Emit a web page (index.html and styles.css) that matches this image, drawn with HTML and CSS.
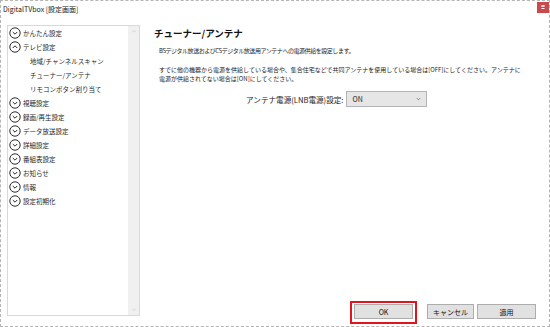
FILE: index.html
```html
<!DOCTYPE html>
<html lang="ja">
<head>
<meta charset="utf-8">
<link rel="stylesheet" href="styles.css">
</head>
<body>
<div class="window">
  <div class="titlebar">
    <span class="title">DigitalTVbox [設定画面]</span>
    <span class="close"><svg width="12" height="11" viewBox="0 0 12 11"><path d="M4 4h4M6 3v2M4.5 6.5h3" stroke="#fff" stroke-width="1"/></svg></span>
  </div>
  <div class="main">
    <div class="tree">
      <div class="tree-list">
        <div class="item"><svg class="ic" viewBox="0 0 12 12"><circle cx="6" cy="6" r="5.2"/><path d="M3.8 5l2.2 2.2L8.2 5"/></svg>かんたん設定</div>
        <div class="item"><svg class="ic" viewBox="0 0 12 12"><circle cx="6" cy="6" r="5.2"/><path d="M3.8 7l2.2-2.2L8.2 7"/></svg>テレビ設定</div>
        <div class="item sub">地域/チャンネルスキャン</div>
        <div class="item sub">チューナー/アンテナ</div>
        <div class="item sub">リモコンボタン割り当て</div>
        <div class="item"><svg class="ic" viewBox="0 0 12 12"><circle cx="6" cy="6" r="5.2"/><path d="M3.8 5l2.2 2.2L8.2 5"/></svg>視聴設定</div>
        <div class="item"><svg class="ic" viewBox="0 0 12 12"><circle cx="6" cy="6" r="5.2"/><path d="M3.8 5l2.2 2.2L8.2 5"/></svg>録画/再生設定</div>
        <div class="item"><svg class="ic" viewBox="0 0 12 12"><circle cx="6" cy="6" r="5.2"/><path d="M3.8 5l2.2 2.2L8.2 5"/></svg>データ放送設定</div>
        <div class="item"><svg class="ic" viewBox="0 0 12 12"><circle cx="6" cy="6" r="5.2"/><path d="M3.8 5l2.2 2.2L8.2 5"/></svg>詳細設定</div>
        <div class="item"><svg class="ic" viewBox="0 0 12 12"><circle cx="6" cy="6" r="5.2"/><path d="M3.8 5l2.2 2.2L8.2 5"/></svg>番組表設定</div>
        <div class="item"><svg class="ic" viewBox="0 0 12 12"><circle cx="6" cy="6" r="5.2"/><path d="M3.8 5l2.2 2.2L8.2 5"/></svg>お知らせ</div>
        <div class="item"><svg class="ic" viewBox="0 0 12 12"><circle cx="6" cy="6" r="5.2"/><path d="M3.8 5l2.2 2.2L8.2 5"/></svg>情報</div>
        <div class="item"><svg class="ic" viewBox="0 0 12 12"><circle cx="6" cy="6" r="5.2"/><path d="M3.8 5l2.2 2.2L8.2 5"/></svg>設定初期化</div>
      </div>
      <div class="scrollbar">
        <svg class="arrow" viewBox="0 0 8 6"><path d="M1.5 4L4 1.5 6.5 4"/></svg>
        <svg class="arrow" viewBox="0 0 8 6"><path d="M1.5 2L4 4.5 6.5 2"/></svg>
      </div>
    </div>
    <div class="content">
      <h1 class="heading">チューナー/アンテナ</h1>
      <p class="desc">BSデジタル放送およびCSデジタル放送用アンテナへの電源供給を設定します。</p>
      <p class="note">すでに他の機器から電源を供給している場合や、集合住宅などで共同アンテナを使用している場合は[OFF]にしてください。アンテナに<br>電源が供給されてない場合は[ON]にしてください。</p>
      <div class="field">
        <span class="label">アンテナ電源(LNB電源)設定:</span>
        <span class="select">ON<svg class="chev" viewBox="0 0 6 4"><path d="M1 1l2 2 2-2"/></svg></span>
      </div>
      <div class="buttons">
        <span class="highlight"><span class="btn ok">OK</span></span>
        <span class="btn cancel">キャンセル</span>
        <span class="btn">適用</span>
      </div>
    </div>
  </div>
</div>
</body>
</html>
```

FILE: styles.css
```css
* { box-sizing: border-box; }
html, body { margin: 0; padding: 0; background: #fff; }
body {
  font-family: "Noto Sans CJK JP", "Noto Sans", sans-serif;
  color: #1a1a1a;
}
.window {
  width: 550px;
  height: 327px;
  border: 1px dashed #b5b5b5;
  display: flex;
  flex-direction: column;
  background: #fff;
}
.titlebar {
  height: 24px;
  display: flex;
  justify-content: space-between;
  align-items: flex-start;
  padding: 1px 0 0 2px;
}
.title {
  font-size: 7px;
  line-height: 14px;
  color: #222;
}
.close {
  width: 12px;
  height: 11px;
  background: #c94a4d;
  display: flex;
}
.main {
  flex: 1;
  display: flex;
  padding: 0 0 7px 6px;
}
.tree {
  width: 133px;
  margin-bottom: 3px;
  border: 1px solid #d9d9d9;
  display: flex;
}
.tree-list {
  flex: 1;
}
.item {
  height: 14px;
  display: flex;
  align-items: center;
  font-size: 6.5px;
  padding-left: 1px;
  white-space: nowrap;
  color: #1f1f1f;
}
.item.sub { padding-left: 22px; }
.ic {
  width: 12px;
  height: 12px;
  margin-right: 2px;
  fill: none;
  stroke: #2a2a2a;
  stroke-width: 1;
}
.scrollbar {
  width: 11px;
  background: #f0f0f0;
  display: flex;
  flex-direction: column;
  justify-content: space-between;
  align-items: center;
  padding: 3px 0 3px;
}
.arrow {
  width: 6px;
  height: 5px;
  fill: none;
  stroke: #c8c8c8;
  stroke-width: 1;
}
.content {
  flex: 1;
  display: flex;
  flex-direction: column;
  padding: 0 13px 0 14px;
}
.heading {
  margin: 1px 0 0;
  font-size: 9.5px;
  font-weight: bold;
  line-height: 14px;
  color: #111;
}
.desc {
  margin: 6px 0 0 5px;
  font-size: 6px;
  line-height: 9px;
  letter-spacing: -0.45px;
  white-space: nowrap;
}
.note {
  margin: 10px 0 0 5px;
  font-size: 6px;
  line-height: 9px;
  white-space: nowrap;
}
.field {
  display: flex;
  align-items: center;
  margin: 8px 0 0 92px;
}
.label {
  font-size: 7.6px;
  margin-right: 3px;
}
.select {
  width: 81px;
  height: 16px;
  border: 1px solid #b4b4b4;
  background: #e6e6e6;
  font-size: 7px;
  display: flex;
  align-items: center;
  justify-content: space-between;
  padding: 0 5px;
}
.chev {
  width: 5px;
  height: 4px;
  fill: none;
  stroke: #707070;
  stroke-width: 1;
}
.buttons {
  margin-top: auto;
  display: flex;
  justify-content: flex-end;
  align-items: center;
  gap: 3px;
}
.highlight {
  border: 2px solid #e3141b;
  padding: 1px 2px 3px 2px;
  margin: -3px 7px -5px 0;
  display: flex;
}
.btn {
  width: 59px;
  height: 15px;
  border: 1px solid #adadad;
  background: #e1e1e1;
  font-size: 7px;
  display: flex;
  align-items: center;
  justify-content: center;
  color: #111;
}
.btn.cancel { width: 47px; }
```
